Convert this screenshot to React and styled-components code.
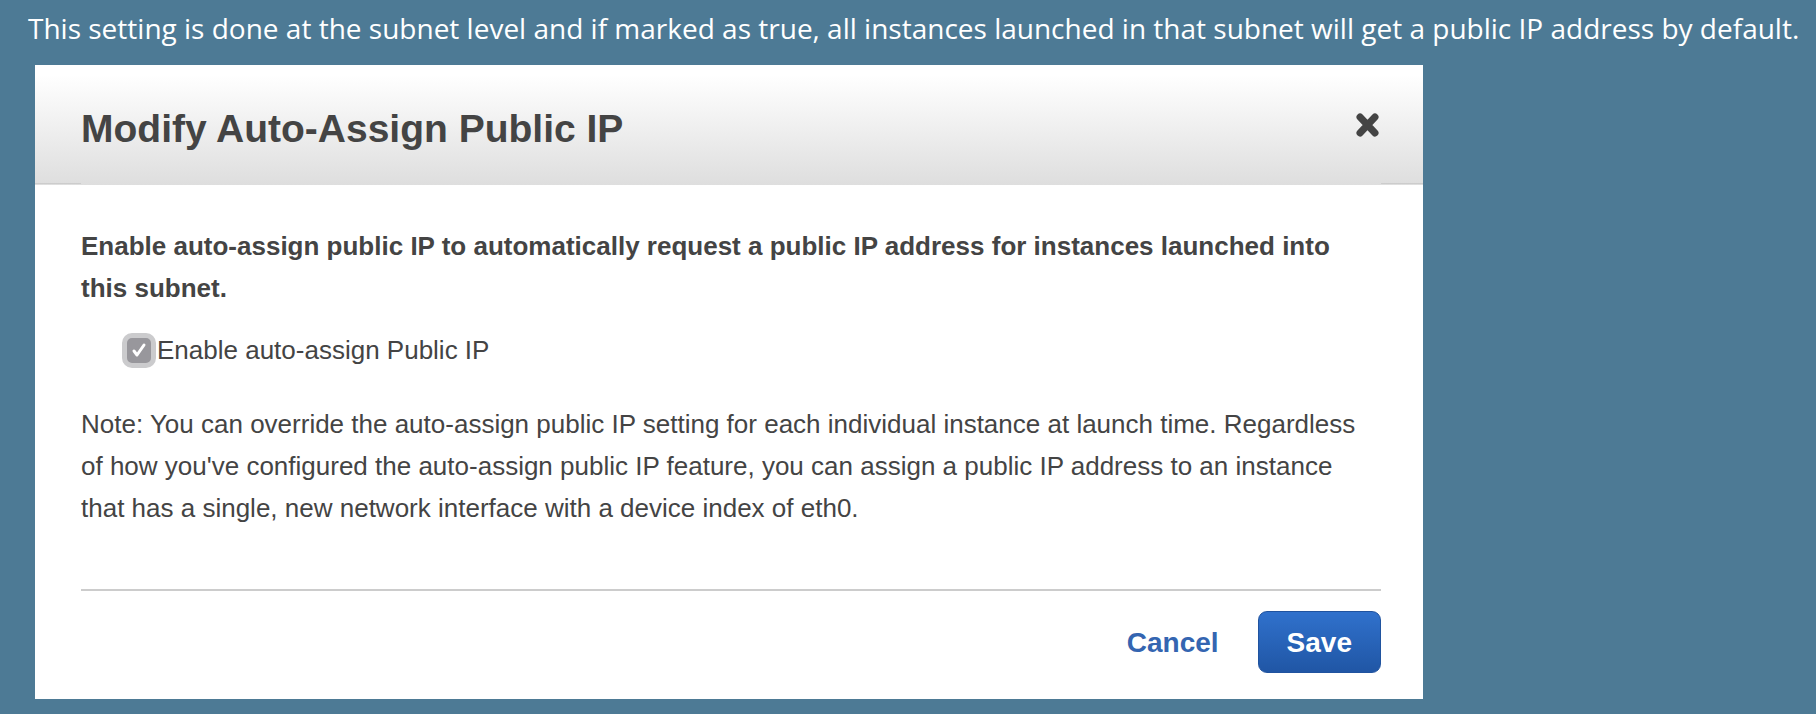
import React, { useState } from "react";
import styled, { createGlobalStyle } from "styled-components";

const GlobalStyle = createGlobalStyle`
  *, *::before, *::after { box-sizing: border-box; }
  body {
    margin: 0;
    background: #4d7a95;
    font-family: "Liberation Sans", Arial, Helvetica, sans-serif;
    color: #444;
  }
`;

const Page = styled.main`
  min-height: 100vh;
  padding: 7px 12px 15px 28px;
`;

const Intro = styled.p`
  margin: 0 0 16px;
  font: 400 28px/42px "Open Sans", sans-serif;
  color: #fff;
`;

const Dialog = styled.section`
  max-width: 1388px;
  margin: 0 7px;
  background: #fff;
`;

const Header = styled.header`
  display: flex;
  justify-content: space-between;
  align-items: center;
  height: 120px;
  padding: 0 42px 0 46px;
  background:
    linear-gradient(#ccc, #ccc) left bottom 1px / 46px 1px no-repeat,
    linear-gradient(#ccc, #ccc) right bottom 1px / 42px 1px no-repeat,
    linear-gradient(#fff 8%, #dedede);
`;

const Title = styled.h1`
  margin: 0;
  padding-top: 8px;
  font-size: 39px;
  line-height: 48px;
`;

const CloseButton = styled.button`
  display: flex;
  padding: 0;
  border: 0;
  background: none;
  color: #444;
  cursor: pointer;
`;

const Body = styled.div`
  padding: 40px 42px 0 46px;
  font-size: 26px;
  line-height: 42px;
`;

const Text = styled.p`
  margin: 0;
  font-weight: ${(p) => (p.$strong ? 700 : 400)};
`;

const CheckRow = styled.label`
  display: flex;
  align-items: center;
  width: fit-content;
  margin: 20px 0 32px 41px;
  cursor: pointer;
`;

const CheckBox = styled.span`
  display: grid;
  place-items: center;
  margin-right: 1px;
  > * { grid-area: 1 / 1; }
`;

const CheckInput = styled.input`
  appearance: none;
  width: 34px;
  height: 35px;
  margin: 0;
  border: 5px solid #cbcbcd;
  border-radius: 10px;
  background: #98979c;
`;

const CheckMark = styled.svg`
  pointer-events: none;
`;

const Footer = styled.footer`
  display: flex;
  justify-content: flex-end;
  align-items: center;
  gap: 10px;
  margin: 60px 42px 0 46px;
  padding: 20px 0 26px;
  border-top: 2px solid #ccc;
`;

const Button = styled.button`
  height: 62px;
  padding: 2px 28px 0;
  border: 1px solid ${(p) => (p.$primary ? "#20539f" : "transparent")};
  border-radius: 9px;
  background: ${(p) => (p.$primary ? "linear-gradient(#3071cc, #2056a5)" : "none")};
  color: ${(p) => (p.$primary ? "#fff" : "#3465b1")};
  font: 700 28px/36px "Liberation Sans", Arial, sans-serif;
  cursor: pointer;
`;

export default function App() {
  const [enabled, setEnabled] = useState(true);
  return (
    <Page>
      <GlobalStyle />
      <Intro>
        This setting is done at the subnet level and if marked as true, all instances launched in that
        subnet will get a public IP address by default.
      </Intro>
      <Dialog role="dialog" aria-labelledby="dialog-title">
        <Header>
          <Title id="dialog-title">Modify Auto-Assign Public IP</Title>
          <CloseButton type="button" aria-label="Close">
            <svg width="28" height="24" viewBox="0 0 28 24" aria-hidden="true">
              <path d="M7 4L22 20M22 4L7 20" stroke="currentColor" strokeWidth="7" strokeLinecap="round" />
            </svg>
          </CloseButton>
        </Header>
        <Body>
          <Text $strong>
            Enable auto-assign public IP to automatically request a public IP address for instances launched
            into this subnet.
          </Text>
          <CheckRow htmlFor="auto-assign">
            <CheckBox>
              <CheckInput
                id="auto-assign"
                type="checkbox"
                checked={enabled}
                onChange={(e) => setEnabled(e.target.checked)}
              />
              {enabled && (
                <CheckMark width="16" height="16" viewBox="0 0 16 16" aria-hidden="true">
                  <path d="M3 9L6 13L13 3" fill="none" stroke="#fff" strokeWidth="3" strokeLinecap="round" strokeLinejoin="round" />
                </CheckMark>
              )}
            </CheckBox>
            Enable auto-assign Public IP
          </CheckRow>
          <Text>
            Note: You can override the auto-assign public IP setting for each individual instance at launch
            time. Regardless of how you've configured the auto-assign public IP feature, you can assign a
            public IP address to an instance that has a single, new network interface with a device index of
            eth0.
          </Text>
        </Body>
        <Footer>
          <Button type="button">Cancel</Button>
          <Button type="button" $primary>Save</Button>
        </Footer>
      </Dialog>
    </Page>
  );
}
